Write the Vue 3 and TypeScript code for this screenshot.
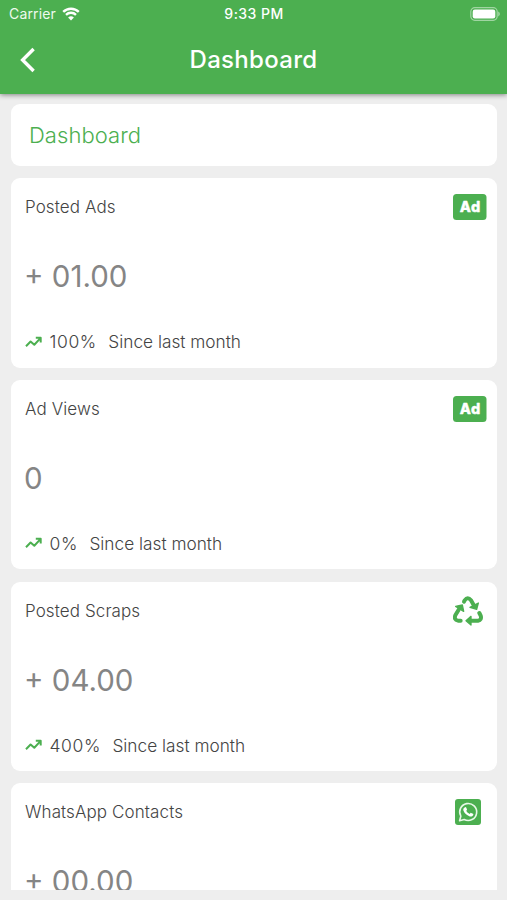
<script setup lang="ts">
type IconName = 'ad' | 'recycle' | 'whatsapp'

interface Stat {
  label: string
  value: string
  percent?: string
  icon: IconName
}

const stats: Stat[] = [
  { label: 'Posted Ads', value: '+ 01.00', percent: '100%', icon: 'ad' },
  { label: 'Ad Views', value: '0', percent: '0%', icon: 'ad' },
  { label: 'Posted Scraps', value: '+ 04.00', percent: '400%', icon: 'recycle' },
  { label: 'WhatsApp Contacts', value: '+ 00.00', icon: 'whatsapp' },
]
</script>

<template>
  <div class="screen">
    <header class="header">
      <div class="status">
        <div class="carrier">
          <span>Carrier</span>
          <svg class="wifi" viewBox="0 0 18 14">
            <path d="M1.2 4.9a11.2 11.2 0 0 1 15.6 0" />
            <path d="M4 7.8a7.2 7.2 0 0 1 10 0" />
            <path class="dot" d="M9 13.6 6.1 10.6a4.2 4.2 0 0 1 5.8 0z" />
          </svg>
        </div>
        <span class="time">9:33 PM</span>
        <svg class="battery" viewBox="0 0 31 14">
          <rect class="shell" x="0.8" y="0.7" width="26.4" height="12.6" rx="4" />
          <rect class="charge" x="2.7" y="2.6" width="22.6" height="8.8" rx="2.2" />
          <path class="cap" d="M28.2 4.6c2.2.8 2.2 4 0 4.8z" />
        </svg>
      </div>
      <div class="bar">
        <svg class="back" viewBox="0 0 16 26"><path d="M13.6 2 2.6 13l11 11" /></svg>
        <h1 class="title">Dashboard</h1>
      </div>
    </header>

    <main class="list">
      <section class="card heading"><h2>Dashboard</h2></section>
      <section v-for="s in stats" :key="s.label" class="card stat">
        <div class="top">
          <span class="label">{{ s.label }}</span>
          <svg v-if="s.icon === 'ad'" class="icon ad" viewBox="0 0 34 26">
            <rect width="33.5" height="26" rx="3.5" />
            <text x="17.200" y="18.300" text-anchor="middle">Ad</text>
          </svg>
          <svg v-else-if="s.icon === 'recycle'" class="icon recycle" viewBox="69 75 90 90">
            <path class="line" d="M102 92 104 88Q113 76 123 88L131 102" />
            <path d="M145 96 140 115 120 109Z" />
            <path class="line" d="M92 149H84Q71 146 76 133L86 116" />
            <path d="M77 106 97 102 101 121Z" />
            <path class="line" d="M148 126 152 134Q156 147 144 149H121" />
            <path d="M123 136V162L108 149Z" />
          </svg>
          <svg v-else class="icon whatsapp" viewBox="0 0 26 26">
            <rect width="26" height="26" rx="3" />
            <path class="bubble" d="M4.6 21.700 5.800 17.200A8.500 8.500 0 1 1 9.200 20.500Z" />
            <path class="phone" d="M10.200 8.200c.5-.2.900 0 1.100.5l.7 1.700c.1.400-.4.900-.8 1.400.8 1.500 2 2.500 3.500 3.200.5-.5.900-1.300 1.400-1.100l1.900.9c.5.300.4.900.1 1.500-.6 1.100-2 1.500-3.300 1.100-3.400-1-5.300-3-6.400-5.800-.4-1.400.3-3 1.800-3.400z" />
          </svg>
        </div>
        <div class="value">{{ s.value }}</div>
        <div v-if="s.percent" class="trend">
          <svg class="arrow" viewBox="0 0 17 12">
            <path d="M1 10.300 5.600 5.500 9.300 8.800 15 2.600M10.800 1.700H15.700V6.600" />
          </svg>
          <span class="percent">{{ s.percent }}</span>
          <span>Since last month</span>
        </div>
      </section>
    </main>
  </div>
</template>

<style>
body {
  background: #eeeeee;
}
</style>

<style scoped>
.screen {
  display: flex;
  flex-direction: column;
  box-sizing: border-box;
  height: 900px;
  padding-bottom: 10px;
  overflow: hidden;
  background: #eeeeee;
  font-family: Inter, 'Liberation Sans', sans-serif;
}
.header {
  flex: none;
  height: 94px;
  background: #4caf50;
  box-shadow: 0 1px 5px rgba(0, 0, 0, 0.45);
  color: #fff;
  z-index: 1;
}
.status {
  display: grid;
  grid-template-columns: 1fr auto 1fr;
  align-items: center;
  height: 27px;
  padding: 0 6px 0 9px;
  font-size: 14px;
}
.carrier {
  display: flex;
  align-items: center;
  gap: 6px;
  letter-spacing: 0.15px;
  color: #eefaee;
}
.wifi {
  width: 18px;
  height: 14px;
  fill: none;
  stroke: #fff;
  stroke-width: 2.4;
}
.wifi .dot {
  fill: #fff;
  stroke: none;
}
.time {
  margin-right: 2px;
  font-size: 14px;
  font-weight: 500;
  letter-spacing: 0.45px;
}
.battery {
  justify-self: end;
  width: 31px;
  height: 14px;
}
.shell {
  fill: none;
  stroke: #a0d5a2;
  stroke-width: 1.2;
}
.charge {
  fill: #fff;
}
.cap {
  fill: #a0d5a2;
}
.bar {
  display: grid;
  grid-template-columns: 60px 1fr 60px;
  align-items: center;
  height: 65px;
}
.back {
  width: 16px;
  height: 26px;
  margin-left: 20px;
  fill: none;
  stroke: #fff;
  stroke-width: 3.4;
}
.title {
  margin: 0;
  text-align: center;
  font-size: 24px;
  font-weight: 500;
  letter-spacing: 0.3px;
}
.list {
  flex: 1;
  min-height: 0;
  display: flex;
  flex-direction: column;
  gap: 12.2px;
  padding: 10px 10px 0 10.5px;
  overflow: hidden;
}
.card {
  flex: none;
  box-sizing: border-box;
  border-radius: 9px;
  background: #fff;
}
.heading {
  display: flex;
  align-items: center;
  height: 62px;
  padding-left: 18.5px;
}
.heading h2 {
  margin: 0;
  font-size: 22px;
  font-weight: 300;
  letter-spacing: 0.05px;
  color: #4caf50;
}
.stat {
  display: flex;
  flex-direction: column;
  height: 189.5px;
  padding: 13px 10px 14px 14.5px;
}
.top {
  display: flex;
  align-items: center;
  justify-content: space-between;
  height: 32px;
}
.label {
  font-size: 17px;
  font-weight: 300;
  letter-spacing: 0.1px;
  color: #444;
}
.icon {
  fill: #4caf50;
}
.ad {
  width: 34px;
  height: 26px;
}
.ad text {
  font-size: 14.5px;
  font-weight: 800;
  letter-spacing: 0.6px;
  fill: #fff;
  stroke: #fff;
  stroke-width: 0.4;
  stroke-linejoin: round;
}
.recycle {
  width: 30px;
  height: 30px;
  margin-right: 4px;
}
.recycle path {
  stroke: #4caf50;
  stroke-width: 4;
  stroke-linejoin: round;
}
.recycle .line {
  fill: none;
  stroke-width: 12;
  stroke-linecap: round;
}
.whatsapp {
  width: 26px;
  height: 26px;
  margin-right: 6px;
}
.bubble {
  fill: none;
  stroke: #e8f8e8;
  stroke-width: 1.6;
  stroke-linejoin: round;
}
.phone {
  fill: #fff;
}
.value {
  display: flex;
  align-items: center;
  height: 44px;
  margin-top: 31px;
  margin-left: -1px;
  font-size: 29.5px;
  font-weight: 400;
  color: #858585;
}
.trend {
  display: flex;
  align-items: center;
  height: 24px;
  margin-top: auto;
  font-size: 17.25px;
  font-weight: 300;
  color: #444;
}
.arrow {
  width: 17px;
  height: 12px;
  margin-right: 7.5px;
  fill: none;
  stroke: #4caf50;
  stroke-width: 2;
  stroke-linejoin: round;
}
.percent {
  margin-right: 11.5px;
  font-size: 17.5px;
  letter-spacing: 0.6px;
}
</style>
